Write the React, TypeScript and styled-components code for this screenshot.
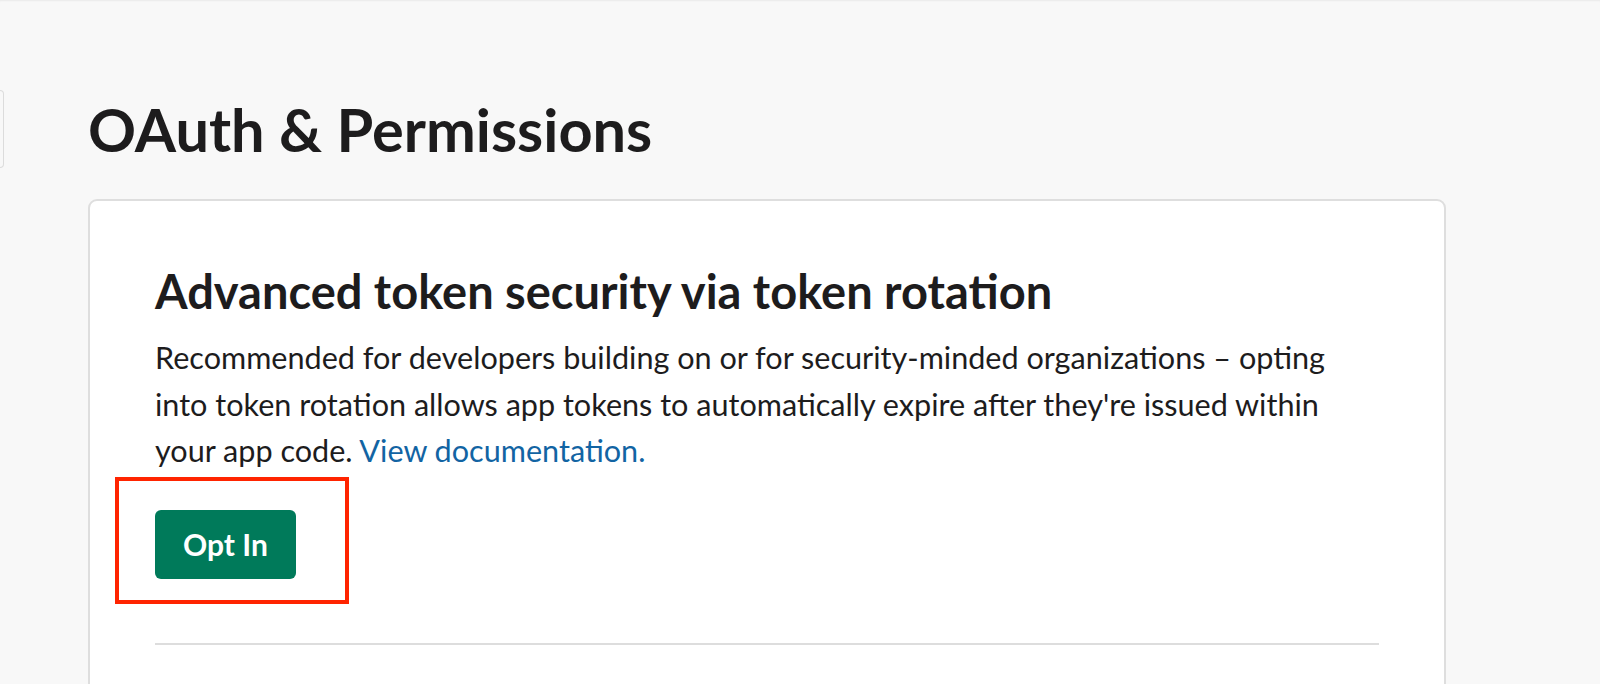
import React from "react";
import styled, { createGlobalStyle } from "styled-components";

const GlobalStyle = createGlobalStyle`
  html, body {
    margin: 0;
    padding: 0;
    background: #f8f8f8;
    font-family: Lato, "Open Sans", "Liberation Sans", sans-serif;
    color: #1d1c1d;
  }
`;

const Page = styled.div`
  display: flex;
  width: 1600px;
  height: 684px;
  overflow: hidden;
  box-shadow: inset 0 2px 2px -1px rgba(0, 0, 0, 0.06);
`;

const SideNav = styled.div`
  width: 4px;
  flex: none;
  padding-top: 90px;
`;

const NavEdge = styled.div`
  height: 76px;
  border: 1.5px solid #dcdcdc;
  border-left: none;
  border-radius: 0 7px 7px 0;
`;

const Main = styled.main`
  flex: none;
  padding-left: 84px;
`;

const Title = styled.h1`
  margin: 94px 0 34px;
  font-size: 59.5px;
  line-height: 71px;
  font-weight: 700;
`;

const Card = styled.section`
  box-sizing: border-box;
  width: 1358px;
  background: #fff;
  border: 2px solid #dedede;
  border-radius: 9px;
  padding: 62px 65px 60px;
  min-height: 600px;
`;

const CardTitle = styled.h2`
  margin: 0 0 16px;
  font-size: 47px;
  line-height: 56px;
  font-weight: 700;
`;

const Text = styled.p`
  margin: 0;
  font-size: 30.6px;
  line-height: 46.5px;
  font-weight: 400;
`;

const Link = styled.a`
  color: #1264a3;
  text-decoration: none;
`;

const ActionRow = styled.div`
  margin-top: 35px;
  padding-bottom: 64px;
  border-bottom: 2px solid #dddddd;
`;

const Highlight = styled.div`
  position: relative;
  display: inline-block;
`;

const Marker = styled.div`
  position: absolute;
  left: -40px;
  top: -33px;
  right: -53px;
  bottom: -25px;
  border: 4px solid #ff2400;
  pointer-events: none;
`;

const Button = styled.button`
  display: block;
  height: 69px;
  padding: 0 28px;
  border: none;
  border-radius: 6px;
  background: #007a5a;
  color: #fff;
  font-family: inherit;
  font-size: 30px;
  font-weight: 700;
  cursor: pointer;
`;

export default function App() {
  return (
    <>
      <GlobalStyle />
      <Page>
        <SideNav>
          <NavEdge />
        </SideNav>
        <Main>
          <Title>OAuth &amp; Permissions</Title>
          <Card>
            <CardTitle>Advanced token security via token rotation</CardTitle>
            <Text>
              Recommended for developers building on or for security-minded
              organizations – opting into token rotation allows app tokens to
              automatically expire after they're issued within your app code.{" "}
              <Link href="#">View documentation.</Link>
            </Text>
            <ActionRow>
              <Highlight>
                <Button>Opt In</Button>
                <Marker />
              </Highlight>
            </ActionRow>
          </Card>
        </Main>
      </Page>
    </>
  );
}
